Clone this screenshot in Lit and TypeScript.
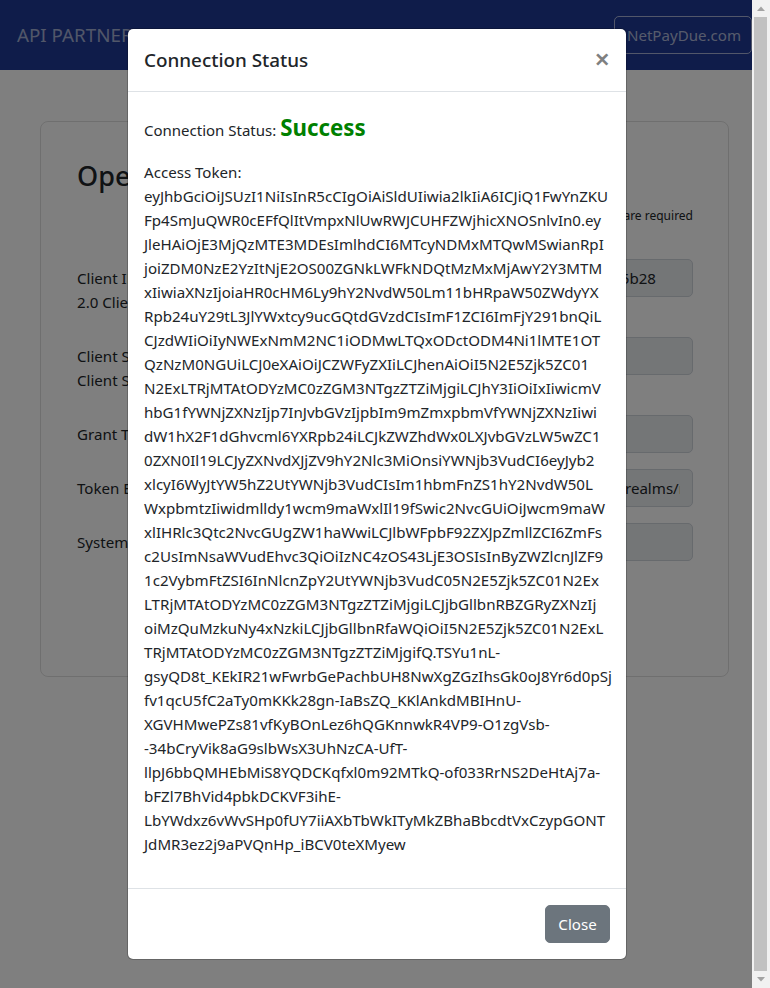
import { LitElement, html, css } from "lit";
import { customElement } from "lit/decorators.js";

const TOKEN = [
  "eyJhbGciOiJSUzI1NiIsInR5cCIgOiAiSldUIiwia2lkIiA6ICJiQ1FwYnZKU",
  "Fp4SmJuQWR0cEFfQlItVmpxNlUwRWJCUHFZWjhicXNOSnlvIn0.ey",
  "JleHAiOjE3MjQzMTE3MDEsImlhdCI6MTcyNDMxMTQwMSwianRpI",
  "joiZDM0NzE2YzItNjE2OS00ZGNkLWFkNDQtMzMxMjAwY2Y3MTM",
  "xIiwiaXNzIjoiaHR0cHM6Ly9hY2NvdW50Lm11bHRpaW50ZWdyYX",
  "Rpb24uY29tL3JlYWxtcy9ucGQtdGVzdCIsImF1ZCI6ImFjY291bnQiL",
  "CJzdWIiOiIyNWExNmM2NC1iODMwLTQxODctODM4Ni1lMTE1OT",
  "QzNzM0NGUiLCJ0eXAiOiJCZWFyZXIiLCJhenAiOiI5N2E5Zjk5ZC01",
  "N2ExLTRjMTAtODYzMC0zZGM3NTgzZTZiMjgiLCJhY3IiOiIxIiwicmV",
  "hbG1fYWNjZXNzIjp7InJvbGVzIjpbIm9mZmxpbmVfYWNjZXNzIiwi",
  "dW1hX2F1dGhvcml6YXRpb24iLCJkZWZhdWx0LXJvbGVzLW5wZC1",
  "0ZXN0Il19LCJyZXNvdXJjZV9hY2Nlc3MiOnsiYWNjb3VudCI6eyJyb2",
  "xlcyI6WyJtYW5hZ2UtYWNjb3VudCIsIm1hbmFnZS1hY2NvdW50L",
  "WxpbmtzIiwidmlldy1wcm9maWxlIl19fSwic2NvcGUiOiJwcm9maW",
  "xlIHRlc3Qtc2NvcGUgZW1haWwiLCJlbWFpbF92ZXJpZmllZCI6ZmFs",
  "c2UsImNsaWVudEhvc3QiOiIzNC4zOS43LjE3OSIsInByZWZlcnJlZF9",
  "1c2VybmFtZSI6InNlcnZpY2UtYWNjb3VudC05N2E5Zjk5ZC01N2Ex",
  "LTRjMTAtODYzMC0zZGM3NTgzZTZiMjgiLCJjbGllbnRBZGRyZXNzIj",
  "oiMzQuMzkuNy4xNzkiLCJjbGllbnRfaWQiOiI5N2E5Zjk5ZC01N2ExL",
  "TRjMTAtODYzMC0zZGM3NTgzZTZiMjgifQ.TSYu1nL-",
  "gsyQD8t_KEkIR21wFwrbGePachbUH8NwXgZGzIhsGk0oJ8Yr6d0pSj",
  "fv1qcU5fC2aTy0mKKk28gn-IaBsZQ_KKlAnkdMBIHnU-",
  "XGVHMwePZs81vfKyBOnLez6hQGKnnwkR4VP9-O1zgVsb-",
  "-34bCryVik8aG9slbWsX3UhNzCA-UfT-",
  "llpJ6bbQMHEbMiS8YQDCKqfxl0m92MTkQ-of033RrNS2DeHtAj7a-",
  "bFZl7BhVid4pbkDCKVF3ihE-",
  "LbYWdxz6vWvSHp0fUY7iiAXbTbWkITyMkZBhaBbcdtVxCzypGONT",
  "JdMR3ez2j9aPVQnHp_iBCV0teXMyew",
];

const ROWS = [
  { label: ["Client ID:", "2.0 Client ID"], value: "97a9f99d-57a1-4c10-8630-3dc7583e5b28" },
  { label: ["Client Secret:", "Client Secret Key"], value: "" },
  { label: ["Grant Type:"], value: "" },
  { label: ["Token Endpoint:"], value: "https://account.multntegration.com/realms/npd-test/protocol" },
  { label: ["System Name:"], value: "" },
];

@customElement("app-root")
export class AppRoot extends LitElement {
  static styles = css`
    :host {
      display: block;
      width: 770px;
      height: 988px;
      overflow: hidden;
      font-family: "Noto Sans", "Open Sans", sans-serif;
      font-size: 15.1px;
      line-height: 24px;
      color: #212529;
    }
    .window { display: flex; height: 988px; }
    .page { position: relative; width: 752px; flex: none; background: #fff; overflow: hidden; }
    .nav {
      height: 70px;
      background: #1e3894;
      display: flex;
      align-items: center;
      justify-content: space-between;
      padding-left: 17px;
    }
    .brand { font-size: 18.8px; color: rgba(255, 255, 255, 0.6); white-space: nowrap; }
    .site {
      width: 138px;
      height: 38px;
      box-sizing: border-box;
      margin-top: -1px;
      border: 1px solid rgba(255, 255, 255, 0.6);
      border-radius: 5px;
      color: rgba(255, 255, 255, 0.65);
      font-size: 15.1px;
      display: flex;
      align-items: center;
      justify-content: center;
      padding-left: 2px;
    }
    .card {
      margin: 51px 23px 0 40px;
      height: 556px;
      box-sizing: border-box;
      border: 1px solid rgba(0, 0, 0, 0.125);
      border-radius: 8px;
      padding: 34px 35px 0 36px;
    }
    .card h3 { margin: 0; font-size: 27px; line-height: 40px; font-weight: 500; }
    .note { margin-top: 10px; height: 53px; text-align: right; font-size: 12px; line-height: 20px; }
    .row { display: grid; grid-template-columns: 275px 1fr; margin-bottom: 16px; }
    .row label { padding: 7px 0; display: block; }
    .row input {
      width: 100%;
      height: 38px;
      box-sizing: border-box;
      border: 1px solid #ced4da;
      border-radius: 5px;
      background: #e9ecef;
      color: #212529;
      font: inherit;
      padding: 6px 12px;
    }
    .backdrop { position: absolute; inset: 0; background: rgba(0, 0, 0, 0.5); }
    .modal {
      position: absolute;
      left: 127px;
      top: 28px;
      width: 500px;
      box-sizing: border-box;
      background: #fff;
      border: 1px solid rgba(0, 0, 0, 0.2);
      background-clip: padding-box;
      border-radius: 6px;
    }
    .head {
      display: flex;
      justify-content: space-between;
      align-items: center;
      padding: 16px;
      border-bottom: 1px solid #dee2e6;
    }
    .title { font-size: 18.85px; line-height: 30px; font-weight: 500; }
    .x { font-size: 27px; line-height: 30px; font-weight: 600; color: #808080; margin-top: -2px; }
    .body { padding: 16px 16px 32px; }
    .status {
      height: 36px;
      box-sizing: border-box;
      padding-top: 2px;
      margin-bottom: 16px;
      font-size: 15px;
      white-space: nowrap;
      line-height: 36px;
    }
    .status b { font-size: 22.3px; font-weight: 700; color: #008000; }
    .token { white-space: nowrap; }
    .foot {
      display: flex;
      justify-content: flex-end;
      padding: 16px;
      border-top: 1px solid #dee2e6;
    }
    .close {
      width: 65px;
      height: 38px;
      border: 1px solid #6c757d;
      border-radius: 5px;
      background: #6c757d;
      color: #fff;
      font: inherit;
      padding: 0;
    }
    .bar { width: 18px; flex: none; background: #f1f1f1; display: flex; flex-direction: column; }
    .arrow { height: 17px; display: block; }
    .thumb { flex: 1; margin: 0 3px 0 2px; background: #c1c1c1; }
  `;

  render() {
    return html`
      <div class="window">
        <div class="page">
          <div class="nav">
            <span class="brand">API PARTNER PORTAL</span>
            <span class="site">NetPayDue.com</span>
          </div>
          <div class="card">
            <h3>OpenID Connect</h3>
            <div class="note">Fields marked with * are required</div>
            ${ROWS.map(
              (r) => html`<div class="row">
                <label>${r.label.map((l) => html`<div>${l}</div>`)}</label>
                <input disabled .value=${r.value} />
              </div>`
            )}
          </div>
          <div class="backdrop"></div>
          <div class="modal">
            <div class="head">
              <span class="title">Connection Status</span>
              <span class="x">×</span>
            </div>
            <div class="body">
              <div class="status">Connection Status: <b>Success</b></div>
              <div class="token">
                <div>Access Token:</div>
                ${TOKEN.map((t) => html`<div>${t}</div>`)}
              </div>
            </div>
            <div class="foot"><button class="close">Close</button></div>
          </div>
        </div>
        <div class="bar">
          <svg class="arrow" viewBox="0 0 18 17"><path d="M5 11 L9 6.5 L13 11 Z" fill="#a3a3a3" /></svg>
          <div class="thumb"></div>
          <svg class="arrow" viewBox="0 0 18 17"><path d="M5 6 L9 10.5 L13 6 Z" fill="#a3a3a3" /></svg>
        </div>
      </div>
    `;
  }
}
